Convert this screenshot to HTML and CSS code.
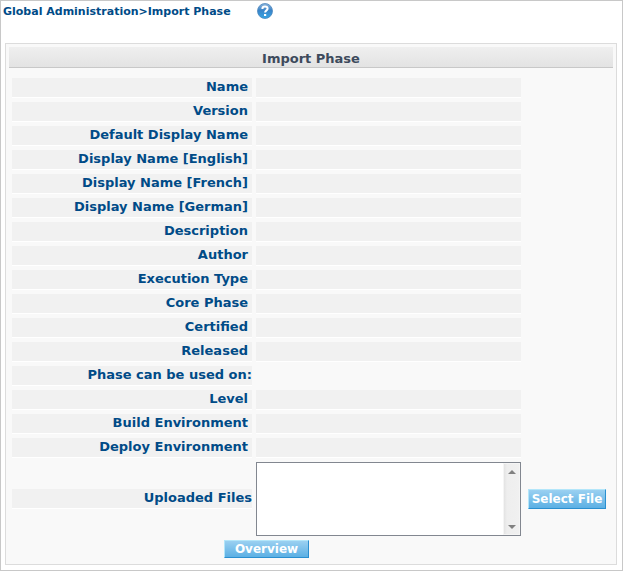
FILE: index.html
```html
<!DOCTYPE html>
<html lang="en">
<head>
<meta charset="utf-8">
<title>Import Phase</title>
<link rel="stylesheet" href="styles.css">
</head>
<body>
<div class="frame">
  <header class="topbar">
    <span class="crumbs"><a href="#">Global Administration</a>&gt;<a href="#">Import Phase</a></span>
    <a class="help" href="#" aria-label="Help">
      <svg width="16" height="16" viewBox="0 0 16 16" aria-hidden="true">
        <defs>
          <linearGradient id="ball" x1="0" y1="0" x2="0" y2="1">
            <stop offset="0" stop-color="#8fb6dc"/>
            <stop offset="0.45" stop-color="#3a83c8"/>
            <stop offset="1" stop-color="#35a5e4"/>
          </linearGradient>
        </defs>
        <circle cx="8" cy="8" r="7.5" fill="url(#ball)" stroke="#4c86bd" stroke-width="0.8"/>
        <path d="M5.4 5.9C5.4 4.3 6.5 3.6 8 3.6s2.6.8 2.6 2.1c0 1.7-2.5 1.7-2.5 3.8" fill="none" stroke="#fff" stroke-width="2"/>
        <rect x="7" y="11" width="2.2" height="2" fill="#fff"/>
      </svg>
    </a>
  </header>
  <main class="panel">
    <h1 class="title">Import Phase</h1>
    <form class="form">
      <label class="label" for="name">Name</label><output class="value" id="name"></output>
      <label class="label" for="version">Version</label><output class="value" id="version"></output>
      <label class="label" for="display">Default Display Name</label><output class="value" id="display"></output>
      <label class="label" for="english">Display Name [English]</label><output class="value" id="english"></output>
      <label class="label" for="french">Display Name [French]</label><output class="value" id="french"></output>
      <label class="label" for="german">Display Name [German]</label><output class="value" id="german"></output>
      <label class="label" for="description">Description</label><output class="value" id="description"></output>
      <label class="label" for="author">Author</label><output class="value" id="author"></output>
      <label class="label" for="execution">Execution Type</label><output class="value" id="execution"></output>
      <label class="label" for="core">Core Phase</label><output class="value" id="core"></output>
      <label class="label" for="certified">Certified</label><output class="value" id="certified"></output>
      <label class="label" for="released">Released</label><output class="value" id="released"></output>
      <div class="label flush">Phase can be used on:</div>
      <label class="label" for="level">Level</label><output class="value" id="level"></output>
      <label class="label" for="build">Build Environment</label><output class="value" id="build"></output>
      <label class="label" for="deploy">Deploy Environment</label><output class="value" id="deploy"></output>
      <label class="label flush" for="files">Uploaded Files</label>
      <div class="listbox">
        <select class="files" id="files" size="4"></select>
        <div class="scroll" aria-hidden="true">
          <svg width="8" height="4" viewBox="0 0 8 4"><path d="M4 0L8 4H0z" fill="#808080"/></svg>
          <svg width="8" height="4" viewBox="0 0 8 4"><path d="M0 0H8L4 4z" fill="#808080"/></svg>
        </div>
      </div>
      <button class="button select" type="button">Select File</button>
      <div class="actions"><button class="button overview" type="button">Overview</button></div>
    </form>
  </main>
</div>
</body>
</html>
```
FILE: styles.css
```css
* {
  box-sizing: border-box;
}

body {
  margin: 0;
  background: #fff;
  color: #004b87;
  font: bold 13px/18px "DejaVu Sans", Verdana, sans-serif;
}

.frame {
  min-height: 100vh;
  padding: 2px 5px 5px 4px;
  border: 1px solid #c8c8c8;
}

.topbar {
  display: flex;
  align-items: flex-start;
  gap: 26px;
  height: 40px;
  margin-left: -2px;
  font-size: 11px;
}

.topbar a {
  color: inherit;
  text-decoration: none;
}

.help svg {
  display: block;
}

.panel {
  padding: 3px;
  border: 1px solid #dcdcdc;
  background: #f9f9f9;
}

.title {
  margin: 0;
  padding-top: 4px;
  border-bottom: 1px solid #c8c8c8;
  background: linear-gradient(#efefef, #e3e3e3);
  color: #3d4a5c;
  font-size: 13px;
  line-height: 16px;
  text-align: center;
}

.form {
  display: grid;
  grid-template-columns: 240px 265px auto;
  justify-content: start;
  align-items: center;
  gap: 4px;
  padding: 10px 3px 3px;
}

.label,
.value {
  height: 20px;
  border-bottom: 1px solid #fff;
  background: #f1f1f1;
}

.label {
  grid-column: 1;
  padding-right: 4px;
  text-align: right;
}

.flush {
  padding-right: 0;
}

.value {
  grid-column: 2;
}

.listbox {
  display: flex;
  height: 74px;
  border: 1px solid #828790;
  background: #fff;
}

.files {
  flex: 1;
  min-width: 0;
  border: 0;
  outline: 0;
  background: #fff;
  overflow: hidden;
}

.scroll {
  display: flex;
  flex-direction: column;
  align-items: center;
  justify-content: space-between;
  width: 17px;
  padding: 6px 0 5px;
  border: 1px solid #f5f5f5;
  background: linear-gradient(90deg, #e3e3e3, #eee 20%, #f0f0f0);
}

.button {
  padding: 0;
  border: 1px solid #2a8fd0;
  border-top-color: #b3e6fa;
  border-left-color: #b3e6fa;
  background: linear-gradient(#9ad0f1, #5cb0e4);
  color: #fff;
  font: inherit;
  font-size: 12px;
  text-align: center;
  white-space: nowrap;
}

.select {
  width: 78px;
  height: 20px;
  margin-left: 3px;
}

.actions {
  display: flex;
  grid-column: 1 / 3;
  justify-content: center;
}

.overview {
  width: 85px;
  height: 18px;
  line-height: 16px;
}
```
